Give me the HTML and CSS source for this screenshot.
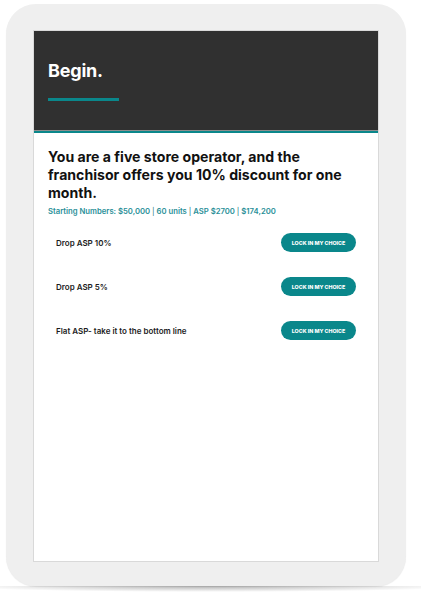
FILE: index.html
```html
<!DOCTYPE html>
<html lang="en">
<head>
<meta charset="utf-8">
<title>Begin.</title>
<link rel="stylesheet" href="styles.css">
</head>
<body>
<div class="device">
  <div class="screen">
    <header class="hero">
      <h1 class="hero-title">Begin.</h1>
      <div class="hero-bar"></div>
    </header>
    <main class="content">
      <h2 class="question">You are a five store operator, and the franchisor offers you 10% discount for one month.</h2>
      <p class="numbers">Starting Numbers: $50,000 <span class="sep">|</span> 60 units <span class="sep">|</span> ASP $2700 <span class="sep">|</span> $174,200</p>
      <ul class="options">
        <li class="option"><span class="option-label">Drop ASP 10%</span><button class="lock-btn">Lock in my choice</button></li>
        <li class="option"><span class="option-label">Drop ASP 5%</span><button class="lock-btn">Lock in my choice</button></li>
        <li class="option"><span class="option-label">Flat ASP- take it to the bottom line</span><button class="lock-btn">Lock in my choice</button></li>
      </ul>
    </main>
  </div>
</div>
<div class="device-shadow"></div>
</body>
</html>
```

FILE: styles.css
```css
html, body {
  margin: 0;
  padding: 0;
  background: #ffffff;
}
body {
  width: 421px;
  height: 601px;
  overflow: hidden;
  font-family: Inter, "Noto Sans", "Liberation Sans", sans-serif;
}
.device {
  margin: 4px 0 0 6px;
  width: 400px;
  height: 582px;
  box-sizing: border-box;
  padding: 26px 0 0 27px;
  background: #efefef;
  border-radius: 30px;
  box-shadow: 0 1px 1px rgba(0, 0, 0, 0.08);
}
.screen {
  width: 346px;
  height: 532px;
  box-sizing: border-box;
  background: #ffffff;
  border: 1px solid #d9d9d9;
  display: flex;
  flex-direction: column;
}
.hero {
  height: 100px;
  background: #303030;
  border-bottom: 1px solid #8c8c8c;
  box-shadow: 0 2px 0 #0a878b;
  padding: 29px 0 0 14px;
  box-sizing: border-box;
  flex: none;
}
.hero-title {
  margin: 0;
  color: #ffffff;
  font-size: 18px;
  line-height: 22px;
  font-weight: 700;
  letter-spacing: -0.2px;
}
.hero-bar {
  margin-top: 16px;
  width: 71px;
  height: 3px;
  background: #0a878b;
}
.content {
  padding: 17px 14px 0 14px;
}
.question {
  margin: 0;
  color: #111111;
  font-size: 14.1px;
  line-height: 18px;
  font-weight: 700;
}
.numbers {
  margin: 4.5px 0 0;
  color: #2a8f98;
  font-size: 7.7px;
  line-height: 10px;
  font-weight: 600;
}
.sep {
  color: #1e6f78;
  font-weight: 400;
}
.options {
  list-style: none;
  margin: 4px 0 0;
  padding: 0 8px;
}
.option {
  height: 44px;
  display: flex;
  align-items: center;
  justify-content: space-between;
}
.option-label {
  color: #1c1c1c;
  font-size: 8px;
  font-weight: 600;
}
.lock-btn {
  width: 75px;
  height: 19px;
  border: none;
  border-radius: 10px;
  background: #0a878b;
  color: #ffffff;
  font-family: inherit;
  font-size: 5.3px;
  font-weight: 800;
  text-transform: uppercase;
  padding: 0;
}
.device-shadow {
  height: 6px;
  margin-top: 0;
  background: radial-gradient(ellipse 60% 100% at 50% 0%, rgba(0, 0, 0, 0.3), rgba(0, 0, 0, 0.06) 80%, rgba(0, 0, 0, 0) 100%);
}
```
